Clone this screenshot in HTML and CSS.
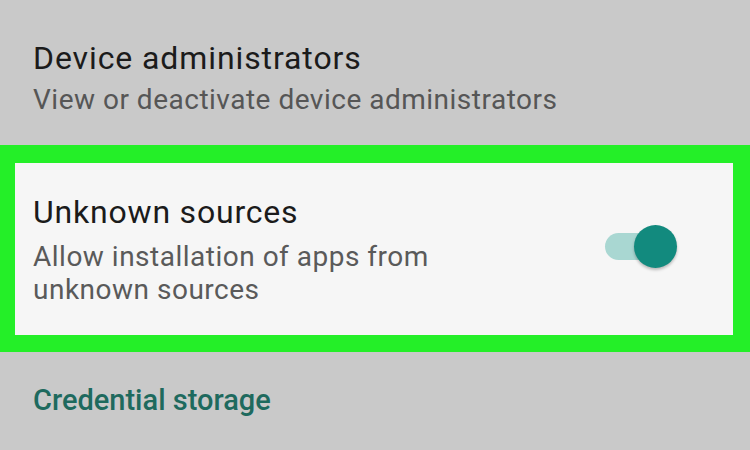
FILE: index.html
```html
<!DOCTYPE html>
<html>
<head>
<meta charset="utf-8">
<link rel="stylesheet" href="styles.css">
</head>
<body>
<div class="screen">
  <div class="item">
    <div class="title">Device administrators</div>
    <div class="summary">View or deactivate device administrators</div>
  </div>
  <div class="highlight">
    <div class="row">
      <div class="text">
        <div class="title2">Unknown sources</div>
        <div class="summary2">Allow installation of apps from<br>unknown sources</div>
      </div>
      <div class="switch">
        <div class="track"></div>
        <div class="thumb"></div>
      </div>
    </div>
  </div>
  <div class="category">
    <div class="cat-title">Credential storage</div>
  </div>
</div>
</body>
</html>
```

FILE: styles.css
```css
html, body {
  margin: 0;
  padding: 0;
}
body {
  background: #c9c9c9;
  font-family: Roboto, "Noto Sans", sans-serif;
  width: 750px;
  height: 450px;
  overflow: hidden;
}
.screen {
  display: flex;
  flex-direction: column;
}
.item {
  height: 145px;
  box-sizing: border-box;
  padding: 39px 0 0 33px;
}
.title {
  font-size: 32px;
  line-height: 38px;
  letter-spacing: 0.9px;
  color: #1b1b1b;
}
.summary {
  margin-top: 6px;
  font-size: 28px;
  line-height: 34px;
  letter-spacing: 0.5px;
  color: #565656;
}
.highlight {
  height: 207px;
  box-sizing: border-box;
  border-style: solid;
  border-color: #24ef28;
  border-width: 18px 17px 17px 15px;
  background: #f6f6f6;
}
.row {
  display: flex;
  align-items: flex-start;
  padding: 30px 56px 0 18px;
}
.text {
  flex: 1;
}
.title2 {
  font-size: 32px;
  line-height: 38px;
  letter-spacing: 0.8px;
  color: #1b1b1b;
}
.summary2 {
  margin-top: 9px;
  font-size: 28px;
  line-height: 33px;
  letter-spacing: 0.5px;
  color: #5a5a5a;
}
.switch {
  position: relative;
  width: 72px;
  height: 43px;
  margin-top: 32px;
}
.track {
  position: absolute;
  left: 0;
  top: 8px;
  width: 60px;
  height: 27px;
  border-radius: 14px;
  background: #a9d7d2;
}
.thumb {
  position: absolute;
  right: 0;
  top: 0;
  width: 43px;
  height: 43px;
  border-radius: 50%;
  background: #128a7e;
  box-shadow: 0 2px 3px rgba(0, 0, 0, 0.25);
}
.category {
  padding: 31px 0 0 33px;
}
.cat-title {
  font-size: 29px;
  line-height: 34px;
  font-weight: 500;
  color: #1e6a5e;
}
```
